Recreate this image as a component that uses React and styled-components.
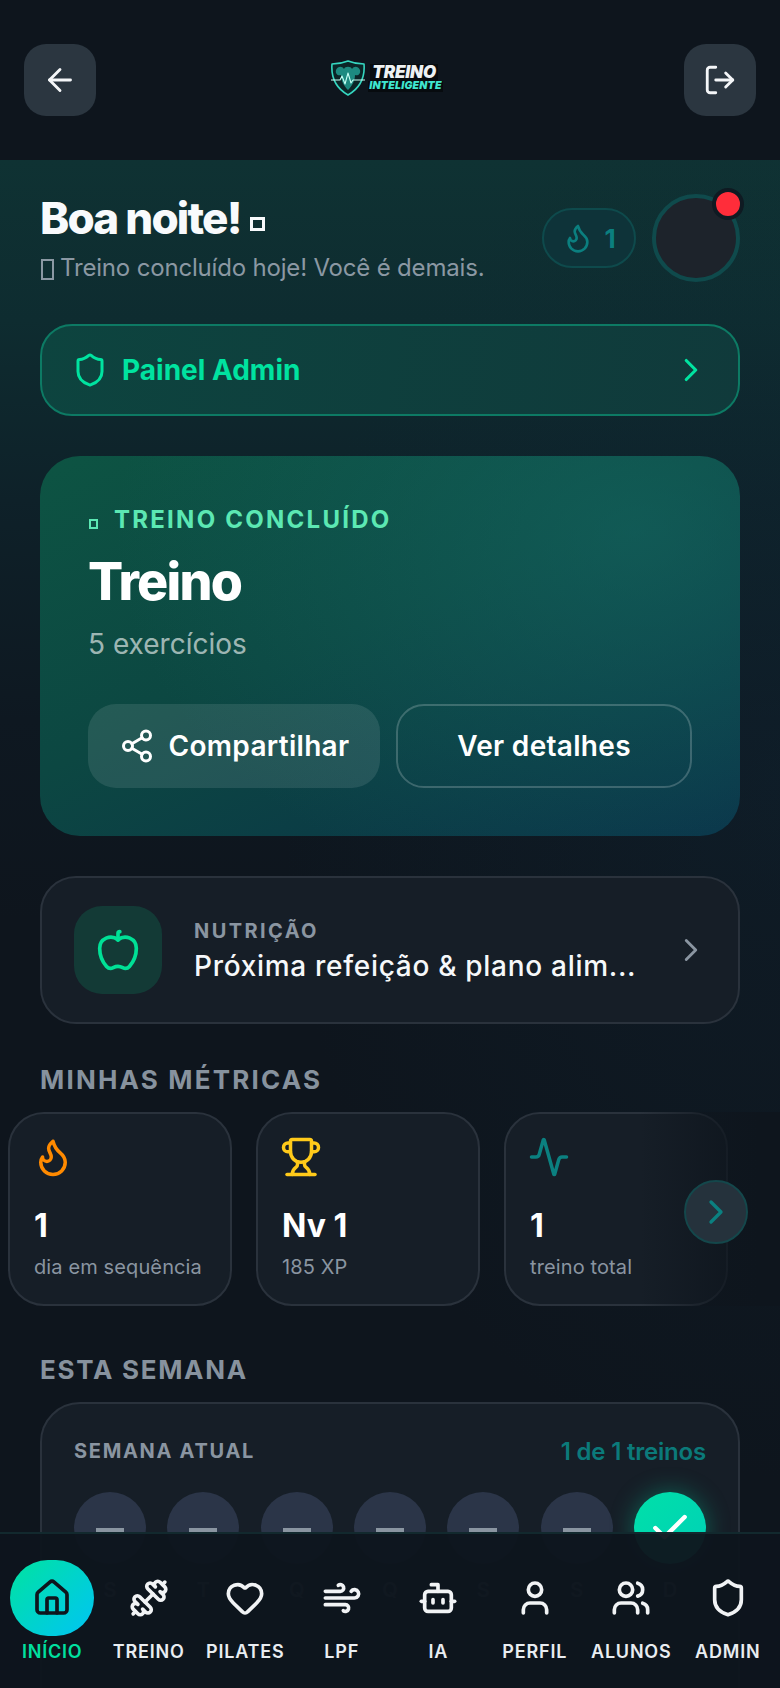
import React from "react";
import styled, { createGlobalStyle } from "styled-components";
import {
  Activity,
  Apple,
  ArrowLeft,
  Bot,
  Check,
  ChevronRight,
  Dumbbell,
  Flame,
  Heart,
  House,
  LogOut,
  Share2,
  Shield,
  Trophy,
  User,
  Users,
  Wind,
} from "lucide-react";

const GlobalStyle = createGlobalStyle`
  * { box-sizing: border-box; }
  html, body { margin: 0; padding: 0; background: #0e151d; }
  body { font-family: "Inter", "Noto Sans", sans-serif; color: #fff; }
`;

const Screen = styled.div`
  position: relative;
  width: 780px;
  height: 1688px;
  overflow: hidden;
  background: #0e151d;
`;

const TopBar = styled.header`
  height: 160px;
  padding: 44px 24px 0;
  display: flex;
  justify-content: space-between;
  align-items: flex-start;
  background: #0e151d;
`;

const SquareButton = styled.button`
  width: 72px;
  height: 72px;
  border: 0;
  border-radius: 22px;
  background: #2b3640;
  color: #f4f6f8;
  display: flex;
  align-items: center;
  justify-content: center;
  padding: 0;
`;

const Logo = styled.div`
  margin: 16px 7px 0 0;
  display: flex;
  align-items: center;
  gap: 2px;
`;

const LogoWords = styled.div`
  display: flex;
  flex-direction: column;
  align-items: flex-start;
  font-style: italic;
  font-weight: 900;
  line-height: 1;
`;

const LogoTop = styled.span`
  margin-left: 2px;
  padding: 0 2px;
  font-size: 17px;
  color: #eef1f3;
  letter-spacing: -0.2px;
  background: #070b0f;
`;

const LogoBottom = styled.span`
  padding: 0 1px;
  font-size: 10.5px;
  color: #3fe6cf;
  letter-spacing: 0.2px;
  background: #070b0f;
`;

const Main = styled.main`
  padding: 28px 40px 0;
  background:
    radial-gradient(ellipse 500px 700px at 100% 620px, rgba(16, 42, 58, 0.3), rgba(16, 42, 58, 0) 100%),
    linear-gradient(180deg, #0f3233 0, #0e2c30 160px, #0e2129 340px, #0e1821 560px, #0e151d 760px);
`;

const Greeting = styled.section`
  display: flex;
  justify-content: space-between;
  align-items: center;
  height: 100px;
`;

const GreetingText = styled.div`
  display: flex;
  flex-direction: column;
  gap: 8px;
`;

const Hello = styled.h1`
  margin: 0;
  font-size: 44px;
  line-height: 52px;
  font-weight: 800;
  letter-spacing: -1.8px;
  white-space: nowrap;
  color: #f8fafc;
`;

const HelloSub = styled.p`
  margin: 0;
  font-size: 24px;
  line-height: 32px;
  letter-spacing: -0.18px;
  white-space: nowrap;
  color: #8b98a3;
`;

/* a missing emoji shows as an empty box in the reference */
const MissingGlyph = styled.span`
  display: inline-block;
  flex: none;
  width: ${(p) => p.$w}px;
  height: ${(p) => p.$h}px;
  margin: ${(p) => p.$margin};
  border: ${(p) => p.$border}px solid currentColor;
  vertical-align: ${(p) => p.$drop || "baseline"};
`;

const GreetingRight = styled.div`
  display: flex;
  align-items: center;
  gap: 16px;
`;

const StreakPill = styled.div`
  width: 94px;
  height: 60px;
  border-radius: 30px;
  border: 2px solid #0e4a4c;
  background: #0e3339;
  color: #0b7f7f;
  display: flex;
  align-items: center;
  justify-content: center;
  gap: 10px;
  font-size: 26px;
  font-weight: 700;
`;

const Avatar = styled.div`
  position: relative;
  width: 88px;
  height: 88px;
  border-radius: 50%;
  border: 4px solid #0f4a4c;
  background: #1d232b;
`;

const AvatarDot = styled.span`
  position: absolute;
  top: -10px;
  right: -8px;
  width: 32px;
  height: 32px;
  border-radius: 50%;
  background: #ff2d3a;
  border: 4px solid #0f1a22;
`;

const AdminLink = styled.div`
  margin-top: 36px;
  height: 92px;
  padding: 0 28px 0 30px;
  display: flex;
  align-items: center;
  gap: 14px;
  border-radius: 32px;
  border: 2px solid #0d7a64;
  background: linear-gradient(100deg, #0d443f, #103a3b);
  color: #00e3a0;
  font-size: 28px;
  font-weight: 700;
`;

const Grow = styled.span`
  flex: 1;
  min-width: 0;
`;

const HeroCard = styled.section`
  margin-top: 40px;
  height: 380px;
  padding: 49px 48px 48px;
  border-radius: 40px;
  background:
    radial-gradient(ellipse 520px 380px at 85% 20%, rgba(22, 110, 104, 0.5), rgba(22, 110, 104, 0) 100%),
    linear-gradient(155deg, #0d5443 0%, #0c4742 45%, #0a3249 100%);
`;

const HeroLabel = styled.div`
  display: flex;
  align-items: center;
  gap: 16px;
  font-size: 24px;
  line-height: 30px;
  font-weight: 700;
  letter-spacing: 2.25px;
  color: #5ce8b3;
`;

const HeroTitle = styled.h2`
  margin: 15px 0 0;
  font-size: 52px;
  line-height: 64px;
  font-weight: 800;
  letter-spacing: -1.8px;
  color: #fff;
`;

const HeroSub = styled.p`
  margin: 12px 0 0;
  font-size: 28px;
  line-height: 36px;
  color: rgba(255, 255, 255, 0.62);
`;

const HeroActions = styled.div`
  margin-top: 42px;
  display: flex;
  gap: 16px;
`;

const HeroButton = styled.div`
  flex: ${(p) => (p.$solid ? "0 0 292px" : "1")};
  height: 84px;
  border-radius: 28px;
  display: flex;
  align-items: center;
  justify-content: center;
  gap: 14px;
  font-size: 28px;
  font-weight: 600;
  letter-spacing: 0.3px;
  color: #fff;
  background: ${(p) => (p.$solid ? "rgba(255, 255, 255, 0.1)" : "transparent")};
  border: ${(p) => (p.$solid ? "0" : "2px solid rgba(255, 255, 255, 0.2)")};
`;

const NutritionCard = styled.section`
  margin-top: 40px;
  height: 148px;
  padding: 0 28px 0 32px;
  display: flex;
  align-items: center;
  gap: 32px;
  border-radius: 36px;
  border: 2px solid #2a323c;
  background: #161e27;
`;

const NutritionIcon = styled.div`
  width: 88px;
  height: 88px;
  flex: none;
  border-radius: 28px;
  background: #133a36;
  color: #00e096;
  display: flex;
  align-items: center;
  justify-content: center;
`;

const NutritionText = styled.div`
  flex: 1;
  min-width: 0;
  display: flex;
  flex-direction: column;
  gap: 2px;
`;

const SmallCaps = styled.div`
  margin-top: 2px;
  font-size: 20px;
  line-height: 28px;
  font-weight: 700;
  letter-spacing: ${(p) => p.$spacing}px;
  color: #8a95a1;
`;

const NutritionTitle = styled.div`
  font-size: 28px;
  line-height: 38px;
  font-weight: 500;
  letter-spacing: 0.7px;
  color: #f6f8fa;
  white-space: nowrap;
`;

const SectionTitle = styled.h3`
  margin: ${(p) => p.$top}px 0 0;
  font-size: 26px;
  line-height: 32px;
  font-weight: 700;
  letter-spacing: ${(p) => p.$spacing}px;
  color: #87929e;
`;

const MetricsWrap = styled.div`
  position: relative;
  margin: 16px -40px 0;
  padding: 0 8px;
`;

const MetricsRow = styled.div`
  display: flex;
  gap: 24px;
  overflow: hidden;
`;

const MetricCard = styled.div`
  flex: 0 0 224px;
  height: 194px;
  padding: 22px 24px 0;
  border-radius: 36px;
  border: 2px solid #2a323c;
  background: #161e27;
`;

const MetricIcon = styled.div`
  height: 42px;
  margin-left: -2px;
  color: ${(p) => p.$color};
`;

const MetricValue = styled.div`
  margin-top: 28px;
  font-size: 32px;
  line-height: 40px;
  font-weight: 700;
  color: #fff;
`;

const MetricLabel = styled.div`
  margin-top: 8px;
  font-size: 20px;
  line-height: 26px;
  letter-spacing: 0.12px;
  white-space: nowrap;
  color: #8a95a1;
`;

const MetricsFade = styled.div`
  position: absolute;
  top: 0;
  right: 0;
  bottom: 0;
  width: 140px;
  background: linear-gradient(90deg, rgba(14, 21, 29, 0), #0e151d 85%);
`;

const ScrollButton = styled.div`
  position: absolute;
  top: 68px;
  right: 32px;
  width: 64px;
  height: 64px;
  border-radius: 50%;
  background: #25323c;
  border: 2px solid #14474b;
  color: #0b8080;
  display: flex;
  align-items: center;
  justify-content: center;
`;

const WeekCard = styled.section`
  margin-top: 16px;
  height: 330px;
  padding: 32px;
  border-radius: 40px;
  border: 2px solid #2a323c;
  background: #161e27;
`;

const WeekHead = styled.div`
  display: flex;
  justify-content: space-between;
  align-items: center;
  height: 28px;
`;

const WeekCount = styled.div`
  margin-top: 3px;
  font-size: 24px;
  font-weight: 600;
  letter-spacing: -0.2px;
  color: #0b7a7a;
`;

const WeekDays = styled.div`
  margin-top: 28px;
  display: flex;
  justify-content: space-between;
`;

const WeekDay = styled.div`
  display: flex;
  flex-direction: column;
  align-items: center;
  gap: 14px;
  font-size: 20px;
  font-weight: 600;
  color: #5a6570;
`;

const DayCircle = styled.div`
  width: 72px;
  height: 72px;
  border-radius: 50%;
  display: flex;
  align-items: center;
  justify-content: center;
  color: #fff;
  background: ${(p) => (p.$done ? "linear-gradient(135deg, #00e0a8, #00d0b8)" : "#2b3548")};
  box-shadow: ${(p) => (p.$done ? "0 0 24px rgba(0, 224, 168, 0.35)" : "none")};
`;

const DayDash = styled.span`
  width: 28px;
  height: 4px;
  margin-top: 4px;
  background: #8a95a1;
`;

const BottomNav = styled.nav`
  position: absolute;
  left: 0;
  right: 0;
  bottom: 0;
  height: 156px;
  padding: 26px 4px 0;
  display: flex;
  border-top: 2px solid #12292e;
  background: rgba(14, 21, 29, 0.96);
`;

const NavItem = styled.div`
  flex: 1;
  display: flex;
  flex-direction: column;
  align-items: center;
  gap: 4px;
  font-size: 18px;
  line-height: 24px;
  font-weight: 600;
  letter-spacing: 0.8px;
  white-space: nowrap;
  color: ${(p) => (p.$active ? "#00e0a0" : "#e9edf1")};
`;

const NavIcon = styled.div`
  width: 84px;
  height: 76px;
  border-radius: 38px;
  display: flex;
  align-items: center;
  justify-content: center;
  color: ${(p) => (p.$active ? "#0e151d" : "#f1f3f5")};
  background: ${(p) => (p.$active ? "linear-gradient(135deg, #00e3a0, #00c4f5)" : "transparent")};
`;

const LogoMark = () => (
  <svg width="36" height="36" viewBox="0 0 36 36" fill="none">
    <path
      d="M18 1 C23 3 29 4 34 4 C35 16 32 27 18 35 C4 27 1 16 2 4 C7 4 13 3 18 1 Z"
      fill="#0b2527"
      stroke="#35d6c0"
      strokeWidth="1.6"
      strokeLinejoin="round"
    />
    <path
      d="M6 10 C8 6 12 6 14 9 C15 6 21 6 22 9 C24 6 28 6 30 10 C31 14 28 16 25 15 C25 21 22 26 18 30 C14 26 11 21 11 15 C8 16 5 14 6 10 Z"
      fill="#1d8a80"
    />
    <path
      d="M1 20 H10 L12 16 L15 24 L18 13 L21 23 L23 20 H35"
      stroke="#c4fff4"
      strokeWidth="1.1"
      strokeLinejoin="round"
    />
  </svg>
);

const metrics = [
  { Icon: Flame, color: "#ff8a00", value: "1", label: "dia em sequência" },
  { Icon: Trophy, color: "#ffca1a", value: "Nv 1", label: "185 XP" },
  { Icon: Activity, color: "#0b8080", value: "1", label: "treino total" },
];

const days = ["S", "T", "Q", "Q", "S", "S", "D"];

const navItems = [
  { Icon: House, label: "INÍCIO", active: true },
  { Icon: Dumbbell, label: "TREINO" },
  { Icon: Heart, label: "PILATES" },
  { Icon: Wind, label: "LPF" },
  { Icon: Bot, label: "IA" },
  { Icon: User, label: "PERFIL" },
  { Icon: Users, label: "ALUNOS" },
  { Icon: Shield, label: "ADMIN" },
];

const App = () => {
  return (
    <Screen>
      <GlobalStyle />
      <TopBar>
        <SquareButton>
          <ArrowLeft size={36} strokeWidth={1.9} />
        </SquareButton>
        <Logo>
          <LogoMark />
          <LogoWords>
            <LogoTop>TREINO</LogoTop>
            <LogoBottom>INTELIGENTE</LogoBottom>
          </LogoWords>
        </Logo>
        <SquareButton>
          <LogOut size={34} strokeWidth={2} />
        </SquareButton>
      </TopBar>

      <Main>
        <Greeting>
          <GreetingText>
            <Hello>
              Boa noite!
              <MissingGlyph $w={15} $h={14} $border={3} $margin="0 0 0 9px" $drop="3px" />
            </Hello>
            <HelloSub>
              <MissingGlyph $w={13} $h={21} $border={2} $margin="0 6px 0 1px" $drop="-4px" />
              Treino concluído hoje! Você é demais.
            </HelloSub>
          </GreetingText>
          <GreetingRight>
            <StreakPill>
              <Flame size={32} strokeWidth={2} />1
            </StreakPill>
            <Avatar>
              <AvatarDot />
            </Avatar>
          </GreetingRight>
        </Greeting>

        <AdminLink>
          <Shield size={36} strokeWidth={2} />
          <Grow>Painel Admin</Grow>
          <ChevronRight size={38} strokeWidth={2} />
        </AdminLink>

        <HeroCard>
          <HeroLabel>
            <MissingGlyph $w={9} $h={10} $border={2} $margin="8px 0 0 1px" />
            <span>TREINO CONCLUÍDO</span>
          </HeroLabel>
          <HeroTitle>Treino</HeroTitle>
          <HeroSub>5 exercícios</HeroSub>
          <HeroActions>
            <HeroButton $solid>
              <Share2 size={36} strokeWidth={2} />
              Compartilhar
            </HeroButton>
            <HeroButton>Ver detalhes</HeroButton>
          </HeroActions>
        </HeroCard>

        <NutritionCard>
          <NutritionIcon>
            <Apple size={44} strokeWidth={2} />
          </NutritionIcon>
          <NutritionText>
            <SmallCaps $spacing={2.4}>NUTRIÇÃO</SmallCaps>
            <NutritionTitle>Próxima refeição &amp; plano alim...</NutritionTitle>
          </NutritionText>
          <ChevronRight size={38} strokeWidth={1.8} color="#8a95a1" />
        </NutritionCard>

        <SectionTitle $top={40} $spacing={2.2}>MINHAS MÉTRICAS</SectionTitle>
        <MetricsWrap>
          <MetricsRow>
            {metrics.map(({ Icon, color, value, label }) => (
              <MetricCard key={label}>
                <MetricIcon $color={color}>
                  <Icon size={42} strokeWidth={2} />
                </MetricIcon>
                <MetricValue>{value}</MetricValue>
                <MetricLabel>{label}</MetricLabel>
              </MetricCard>
            ))}
          </MetricsRow>
          <MetricsFade />
          <ScrollButton>
            <ChevronRight size={40} strokeWidth={2} />
          </ScrollButton>
        </MetricsWrap>

        <SectionTitle $top={48} $spacing={1.7}>ESTA SEMANA</SectionTitle>
        <WeekCard>
          <WeekHead>
            <SmallCaps $spacing={1.7}>SEMANA ATUAL</SmallCaps>
            <WeekCount>1 de 1 treinos</WeekCount>
          </WeekHead>
          <WeekDays>
            {days.map((day, i) => (
              <WeekDay key={i}>
                <DayCircle $done={i === 6}>
                  {i === 6 ? <Check size={44} strokeWidth={2.4} /> : <DayDash />}
                </DayCircle>
                {day}
              </WeekDay>
            ))}
          </WeekDays>
        </WeekCard>
      </Main>

      <BottomNav>
        {navItems.map(({ Icon, label, active }) => (
          <NavItem key={label} $active={active}>
            <NavIcon $active={active}>
              <Icon size={40} strokeWidth={2.2} />
            </NavIcon>
            {label}
          </NavItem>
        ))}
      </BottomNav>
    </Screen>
  );
};

export default App;
